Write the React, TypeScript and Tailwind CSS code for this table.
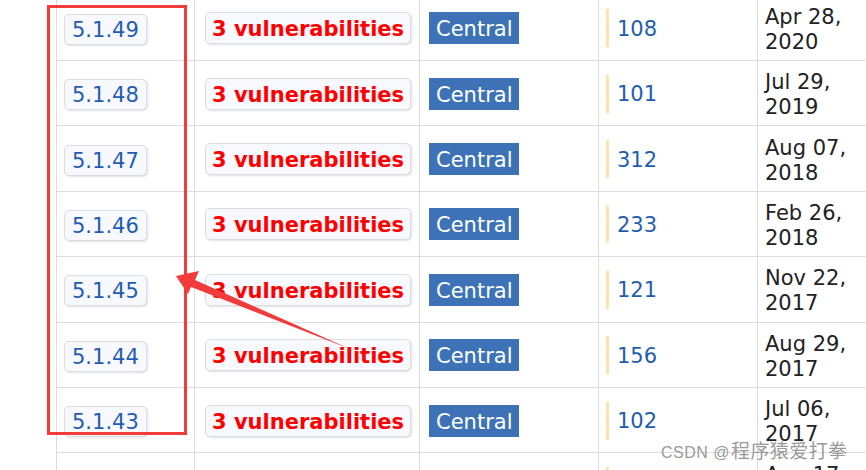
import React from 'react';

type Release = { version: string; usages: number; month: string; year: string };

const releases: Release[] = [
  { version: '5.1.49', usages: 108, month: 'Apr 28,', year: '2020' },
  { version: '5.1.48', usages: 101, month: 'Jul 29,', year: '2019' },
  { version: '5.1.47', usages: 312, month: 'Aug 07,', year: '2018' },
  { version: '5.1.46', usages: 233, month: 'Feb 26,', year: '2018' },
  { version: '5.1.45', usages: 121, month: 'Nov 22,', year: '2017' },
  { version: '5.1.44', usages: 156, month: 'Aug 29,', year: '2017' },
  { version: '5.1.43', usages: 102, month: 'Jul 06,', year: '2017' },
  { version: '5.1.42', usages: 95, month: 'Aug 17,', year: '2017' },
];

function Row({ r }: { r: Release }) {
  return (
    <div className="flex h-[65.4px] shrink-0 border-b border-[#dddddd]">
      <div className="flex w-[138px] shrink-0 items-center border-r border-[#dddddd] pl-[7px] pt-[3px]">
        <span className="rounded-[5px] border border-[#dddddd] bg-[#f8f8ff] px-[7px] pb-[1px] pt-[3px] leading-[25px] text-[#1f5db3] shadow-[1px_1px_2px_rgba(0,0,0,0.12)]">
          {r.version}
        </span>
      </div>
      <div className="flex w-[225px] shrink-0 items-center border-r border-[#dddddd] pl-[10px] pt-[1px]">
        <span className="rounded-[5px] border border-[#dddddd] bg-[#f8f8ff] px-[6px] pb-[1px] pt-[3px] font-bold leading-[26px] text-[#ff0000] shadow-[1px_1px_2px_rgba(0,0,0,0.12)]">
          3 vulnerabilities
        </span>
      </div>
      <div className="flex w-[179px] shrink-0 items-center border-r border-[#dddddd] pl-[9px] pt-[1px]">
        <span className="bg-[#3d73b6] px-[7px] pb-[2px] pt-[4px] leading-[26px] text-white">Central</span>
      </div>
      <div className="flex w-[159px] shrink-0 items-center border-r border-[#dddddd] pl-[7px] pt-[1px]">
        <div className="flex h-[38px] items-center border-l-[3px] border-[#ffe2ae] pl-[8px] pt-[2px] leading-[25px] text-[#1f5db3]">
          {r.usages}
        </div>
      </div>
      <div className="flex min-w-0 flex-1 items-center pl-[7px] pt-[4px] leading-[25px] text-[#222222]">
        <div>
          <div>{r.month}</div>
          <div>{r.year}</div>
        </div>
      </div>
    </div>
  );
}

export default function App() {
  return (
    <div className="relative h-[470px] w-[866px] overflow-hidden bg-white font-['DejaVu_Sans',sans-serif] text-[21px]">
      <div className="ml-[56px] -mt-[4.4px] flex w-[900px] flex-col border-l border-[#dddddd]">
        {releases.map((r) => (
          <Row key={r.version} r={r} />
        ))}
      </div>

      {/* annotation: box around the version column */}
      <div className="absolute left-[47px] top-[5px] h-[430px] w-[140px] border-[3px] border-[#f23b3b]" />

      {/* annotation: arrow */}
      <svg className="pointer-events-none absolute left-0 top-0" width="866" height="470" viewBox="0 0 866 470">
        <polygon
          points="176,276 199,271 195,280 350,349 191,287 188,294"
          fill="#f23b3b"
        />
      </svg>

      {/* watermark */}
      <div className="absolute left-[661px] top-[438px] flex items-baseline whitespace-nowrap text-[#9a9a9a]">
        <span className="font-['Liberation_Sans',sans-serif] text-[16px] tracking-[0.5px]">CSDN @</span>
        <span className="ml-[1px] font-['Noto_Sans_CJK_SC',sans-serif] text-[19px] leading-[24px] tracking-[0.4px]">程序猿爱打拳</span>
      </div>
    </div>
  );
}
